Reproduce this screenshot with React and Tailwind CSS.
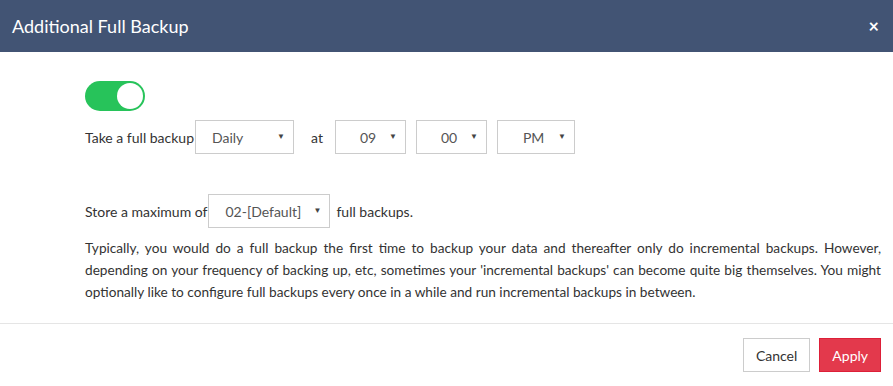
const Select = ({ value, width, pad }) => (
  <div
    className={`relative h-[34px] border border-[#cccccc] bg-white flex items-center text-[14px] text-[#555] ${width} ${pad}`}
  >
    <span>{value}</span>
    <span className="absolute right-[8px] top-[11px] text-[8px] leading-none text-[#444]">▼</span>
  </div>
)

const App = () => (
  <div className="w-[893px] h-[386px] bg-white flex flex-col font-['Lato','Open_Sans',sans-serif] text-[#333]">
    <div className="h-[52px] bg-[#425474] flex items-center justify-between pl-[12px] pr-[14px] shrink-0">
      <h4 className="text-white text-[18px] pt-[1px]">Additional Full Backup</h4>
      <span className="text-white text-[18px] font-bold leading-none">×</span>
    </div>

    <div className="pl-[85px] pr-[12px] flex-1">
      <div className="mt-[29px] w-[60px] h-[30px] rounded-full bg-[#27c35a] flex items-center justify-end pr-[2px]">
        <div className="w-[26px] h-[26px] rounded-full bg-white" />
      </div>

      <div className="mt-[9px] flex items-center text-[14px]">
        <span className="mr-[1px]">Take a full backup</span>
        <Select value="Daily" width="w-[99px]" pad="pl-[16px]" />
        <span className="ml-[17px] mr-[12px]">at</span>
        <Select value="09" width="w-[71px]" pad="pl-[24px]" />
        <div className="w-[10px]" />
        <Select value="00" width="w-[71px]" pad="pl-[24px]" />
        <div className="w-[10px]" />
        <Select value="PM" width="w-[78px]" pad="pl-[25px]" />
      </div>

      <div className="mt-[40px] flex items-center text-[14px]">
        <span className="mr-[1px]">Store a maximum of</span>
        <Select value="02-[Default]" width="w-[122px]" pad="pl-[16px]" />
        <span className="ml-[6px]">full backups.</span>
      </div>

      <p className="mt-[9px] text-[13.65px] leading-[22px] text-justify">
        Typically, you would do a full backup the first time to backup your data and thereafter only do incremental backups. However, depending on your frequency of backing up, etc, sometimes your 'incremental backups' can become quite big themselves. You might optionally like to configure full backups every once in a while and run incremental backups in between.
      </p>
    </div>

    <div className="border-t border-[#e5e5e5] h-[63px] flex items-center justify-end pr-[12px] gap-[9px] shrink-0">
      <button className="h-[34px] px-[12px] border border-[#cccccc] bg-white text-[14px] text-[#333]">Cancel</button>
      <button className="h-[34px] px-[12px] border border-[#dd1f38] bg-[#e3394c] text-[14px] text-white">Apply</button>
    </div>
  </div>
)

export default App
